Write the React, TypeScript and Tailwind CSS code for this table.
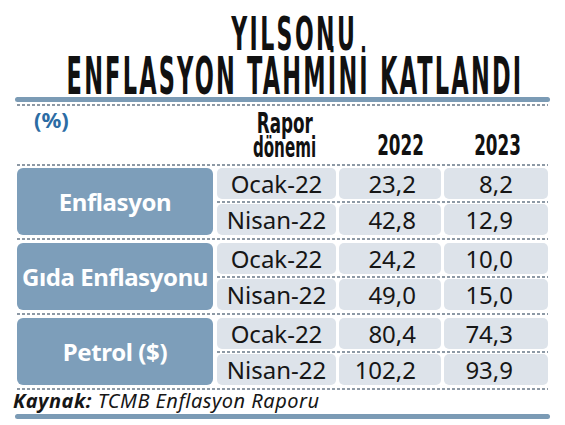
const rows = [
  {
    label: "Enflasyon",
    items: [
      { period: "Ocak-22", a: "23,2", b: "8,2" },
      { period: "Nisan-22", a: "42,8", b: "12,9" },
    ],
  },
  {
    label: "Gıda Enflasyonu",
    items: [
      { period: "Ocak-22", a: "24,2", b: "10,0" },
      { period: "Nisan-22", a: "49,0", b: "15,0" },
    ],
  },
  {
    label: "Petrol ($)",
    items: [
      { period: "Ocak-22", a: "80,4", b: "74,3" },
      { period: "Nisan-22", a: "102,2", b: "93,9" },
    ],
  },
];

const cols = "grid grid-cols-[205px_119px_102px_104px] gap-x-[3px]";
const dots =
  "h-[2px] bg-[image:repeating-linear-gradient(90deg,#8d99a5_0px,#8d99a5_3px,transparent_3px,transparent_5px)]";
const sans = "font-['Noto_Sans','Open_Sans',sans-serif]";
const cond = "font-['DejaVu_Sans',sans-serif] font-bold";

function Cell({ children, className = "" }: { children: React.ReactNode; className?: string }) {
  return (
    <div className={`h-[31px] rounded-[5px] bg-[#dde3ea] flex items-center text-[24px] text-[#161616] ${className}`}>
      {children}
    </div>
  );
}

export default function App() {
  return (
    <div className={`w-[565px] h-[425px] bg-white overflow-hidden flex flex-col ${sans}`}>
      {/* title */}
      <div className="h-[97px] flex flex-col pt-[12px] pl-[24px]">
        <div className="flex justify-center w-full h-[39px]">
          <span className={`${cond} inline-block whitespace-nowrap text-[45.5px] leading-none tracking-[5px] text-[#111] scale-x-[0.484]`}>
            YILSONU
          </span>
        </div>
        <div className="flex justify-center w-full h-[46px]">
          <span className={`${cond} inline-block whitespace-nowrap text-[51px] leading-none tracking-[5px] text-[#111] scale-x-[0.44]`}>
            ENFLASYON TAHMİNİ KATLANDI
          </span>
        </div>
      </div>

      <div className="mx-[15px] h-[5px] rounded-full bg-[#7b9bb5]" />
      <div className={`mx-[17px] mt-[2px] ${dots}`} />

      {/* header */}
      <div className={`mx-[17px] h-[58px] ${cols}`}>
        <div className="pl-[17px] pt-[2px] text-[22px] font-bold text-[#2c6ca4] leading-[22px]">(%)</div>
        <div className="flex flex-col items-center pt-[6px]">
          <span className={`${cond} inline-block text-[28px] leading-[24px] text-[#111] scale-x-[0.6]`}>Rapor</span>
          <span className={`${cond} inline-block text-[28px] leading-[24px] text-[#111] scale-x-[0.54]`}>dönemi</span>
        </div>
        <div className="flex justify-end items-start pr-[25px] pt-[28px]">
          <span className={`${cond} inline-block text-[28px] leading-[24px] text-[#111] scale-x-[0.6] origin-right`}>2022</span>
        </div>
        <div className="flex justify-end items-start pr-[35px] pt-[28px]">
          <span className={`${cond} inline-block text-[28px] leading-[24px] text-[#111] scale-x-[0.6] origin-right`}>2023</span>
        </div>
      </div>

      <div className={`mx-[17px] ${dots}`} />

      {/* body */}
      <div className="mx-[17px] mt-[2px] flex flex-col">
        {rows.map((g, i) => (
          <div key={g.label}>
            {i > 0 && (
              <div className="h-[8px] flex items-center">
                <div className={`w-full ${dots}`} />
              </div>
            )}
            <div className="flex gap-x-[4px]">
              <div className="w-[205px] h-[67px] rounded-[6px] bg-[#7d9eba] flex items-center justify-center text-white text-[24px] font-bold tracking-[-0.4px]">
                {g.label}
              </div>
              <div className="flex-1 flex flex-col">
                {g.items.map((r, j) => (
                  <div key={r.period}>
                    {j > 0 && (
                      <div className="h-[5px] flex items-center">
                        <div className={`w-full ${dots}`} />
                      </div>
                    )}
                    <div className="grid grid-cols-[119px_102px_104px] gap-x-[3px]">
                      <Cell className="justify-center">{r.period}</Cell>
                      <Cell className="justify-end pr-[25px]">{r.a}</Cell>
                      <Cell className="justify-end pr-[35px]">{r.b}</Cell>
                    </div>
                  </div>
                ))}
              </div>
            </div>
          </div>
        ))}
      </div>

      <div className={`mx-[17px] mt-[3px] ${dots}`} />
      <div className="pl-[13px] h-[22px] text-[20px] italic leading-[22px] tracking-[0.5px] text-[#161616]">
        <span className="font-bold">Kaynak:</span> TCMB Enflasyon Raporu
      </div>
      <div className="mx-[15px] mt-[2px] h-[5px] rounded-full bg-[#7b9bb5]" />
    </div>
  );
}
